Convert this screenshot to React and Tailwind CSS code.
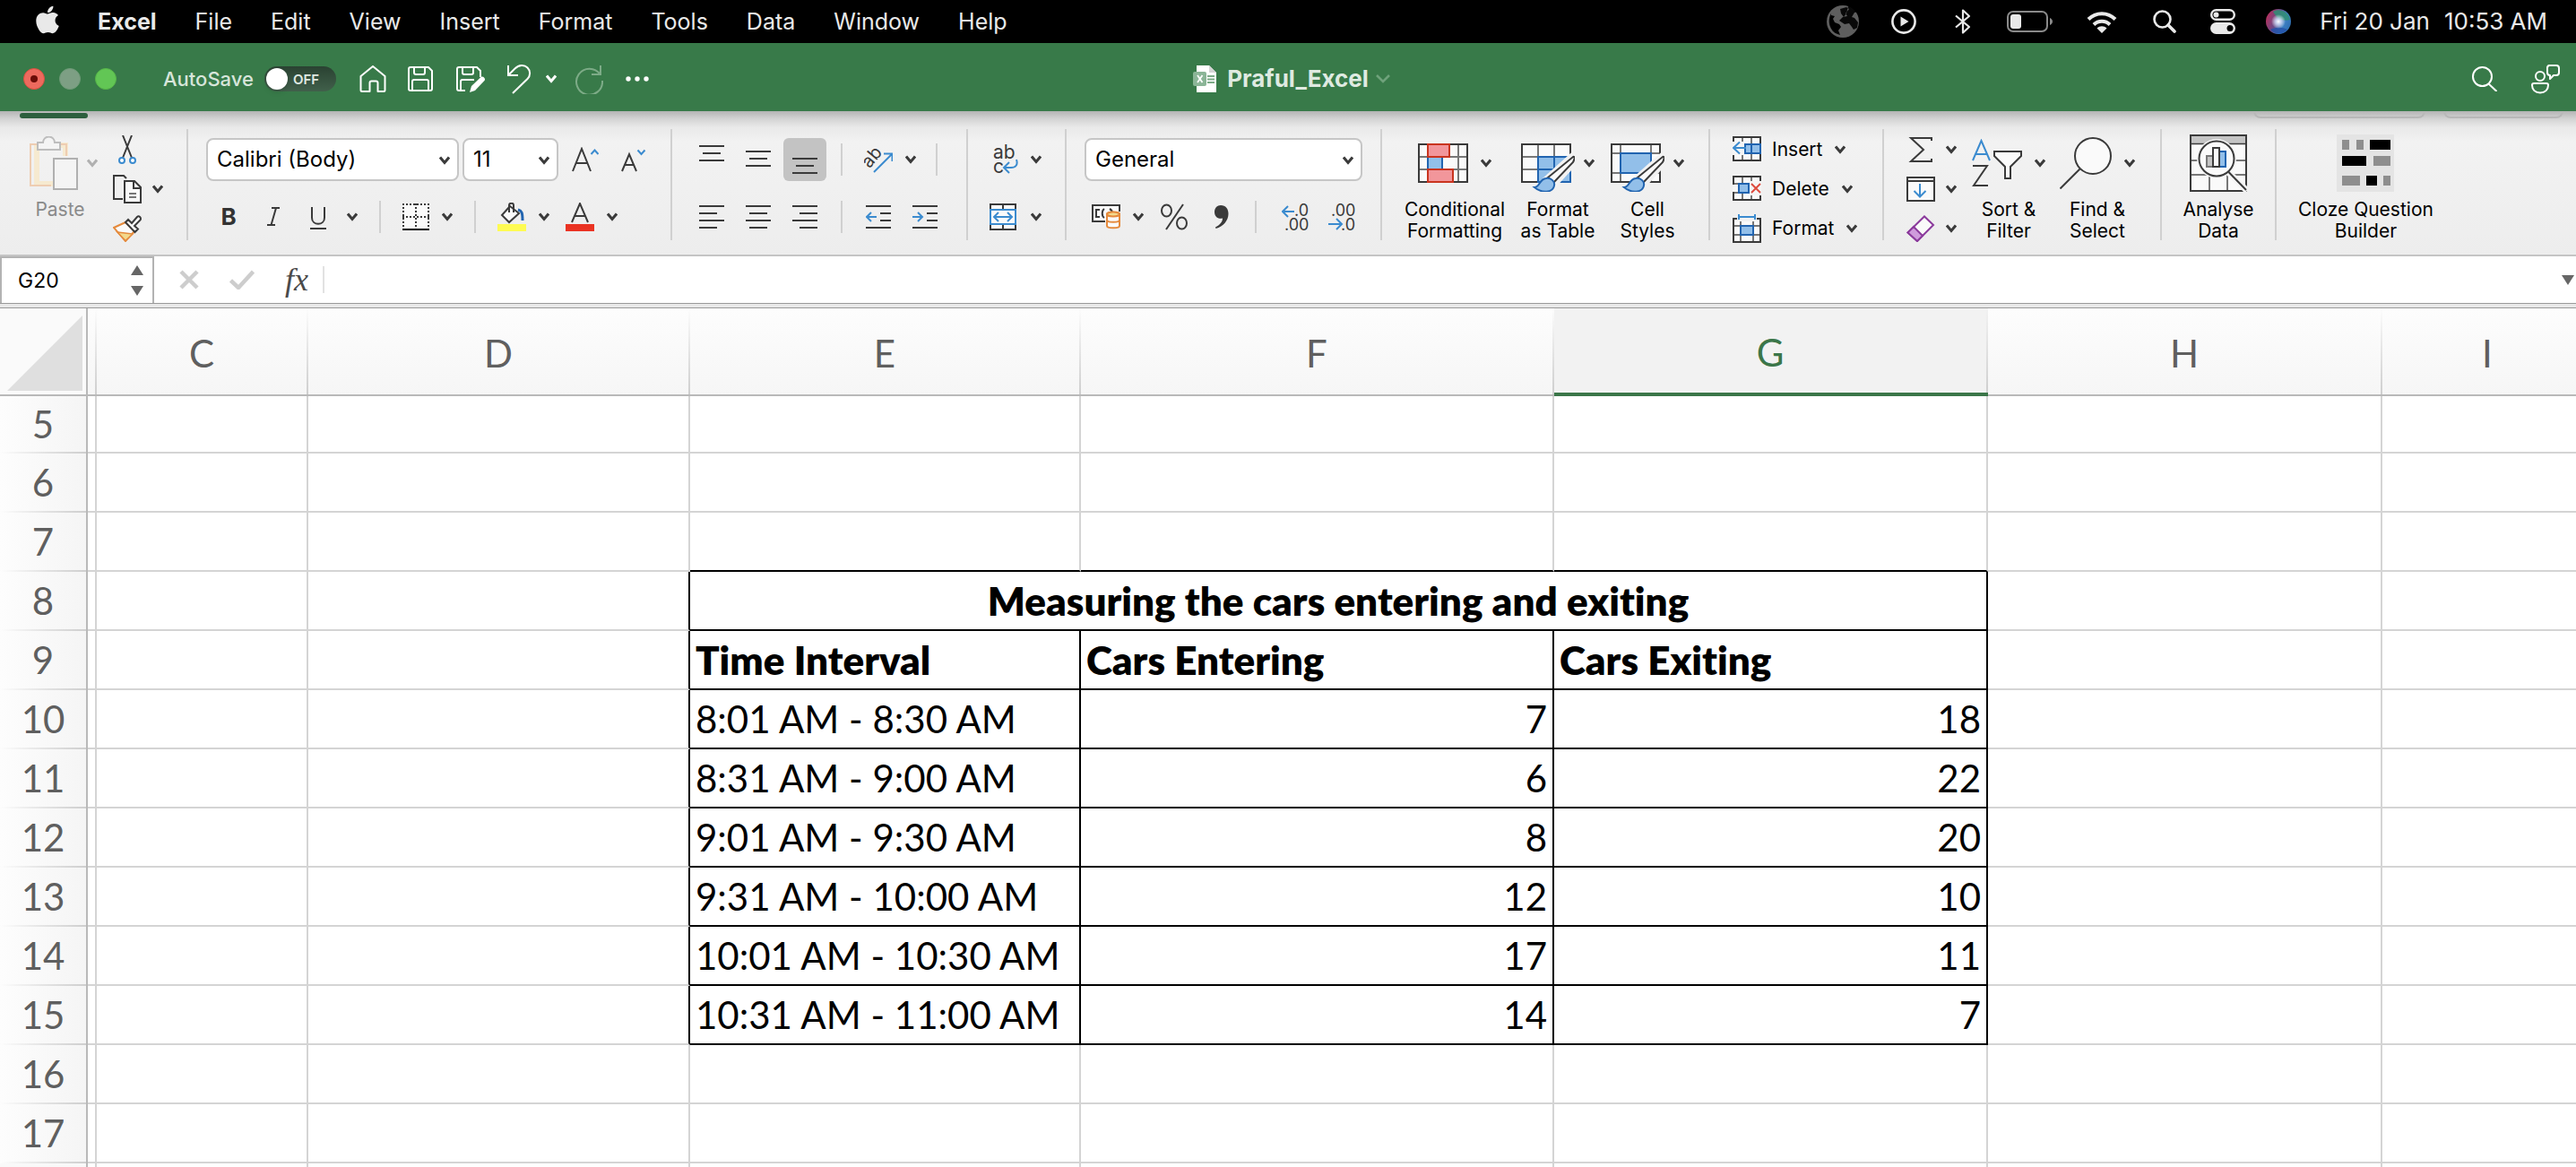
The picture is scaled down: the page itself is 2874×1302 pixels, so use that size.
import React from "react";
import { FaApple } from "react-icons/fa";

const UI = "font-['Inter','Liberation_Sans',sans-serif]";
const SHEET = "font-['Lato','Liberation_Sans',sans-serif]";

function Icon({ w, h, label, children, className = "" }) {
  return (
    <svg
      width={w}
      height={h}
      viewBox={`0 0 ${w} ${h}`}
      fill="none"
      className={`block shrink-0 ${className}`}
      role={label ? "img" : undefined}
      aria-label={label}
      aria-hidden={label ? undefined : true}
    >
      {children}
    </svg>
  );
}

function Chevron({ color = "#3a3a3a", className = "" }) {
  return (
    <Icon w={12} h={10} className={className}>
      <path d="M1 1.5 6 7.5 11 1.5" stroke={color} strokeWidth="3" />
    </Icon>
  );
}

function Tool({ label, className = "", children }) {
  return (
    <button type="button" aria-label={label} className={`flex shrink-0 items-center justify-center ${className}`}>
      {children}
    </button>
  );
}

/* ---------- macOS menu bar ---------- */

function MenuBar() {
  return (
    <header className={`flex h-12 items-center justify-between bg-black pl-10 pr-8 text-[25px] leading-none text-[#e9e9e9] ${UI}`}>
      <nav aria-label="Application menu" className="flex items-center gap-[43px]">
        <FaApple className="h-[36px] w-[26px] -mt-1" aria-label="Apple" />
        <button type="button" className="font-bold">Excel</button>
        {["File", "Edit", "View", "Insert", "Format", "Tools", "Data", "Window", "Help"].map((item) => (
          <button type="button" key={item}>{item}</button>
        ))}
      </nav>
      <div className="flex items-center text-[26px]">
        <Icon w={36} h={36} label="Network" className="mr-9">
          <circle cx="18" cy="18" r="18" fill="#5e5e5e" />
          <path d="M5 9C2 14 2 21 5 26c2 4 6 6 10 7l-2-5 3-4-2-3-5-2-2-4 2-3-4-1z" fill="#000" />
          <path d="M15 4l7-2 3 2-4 5 2 3-5 1-4 4 6 4 5-1 3 4 2 3 4-2 1-6-4-5-3-1 3-5 4-1-3-4-5-3-3 1-2 8-3 4-3-4z" fill="#000" opacity="0.9" />
        </Icon>
        <Icon w={28} h={28} label="Now playing" className="mr-[43px]">
          <circle cx="14" cy="14" r="12.6" stroke="#e9e9e9" strokeWidth="2.6" />
          <path d="M10.5 8.5v11l9-5.5z" fill="#e9e9e9" />
        </Icon>
        <Icon w={18} h={30} label="Bluetooth" className="mr-[40px]">
          <path d="M1 8.5 16 21 9 27.500V2.500L16 9 1 21.500" stroke="#e9e9e9" strokeWidth="2.2" strokeLinejoin="round" />
        </Icon>
        <Icon w={51} h={24} label="Battery" className="mr-[38px]">
          <rect x="1" y="1" width="44" height="22" rx="6" stroke="#8a8a8a" strokeWidth="2" />
          <rect x="4" y="4" width="12" height="16" rx="3" fill="#e9e9e9" />
          <path d="M48 8c4 1.500 4 6.500 0 8z" fill="#8a8a8a" />
        </Icon>
        <Icon w={34} h={25} label="Wi-Fi" className="mr-[40px]">
          <path d="M2 9.500C10.500 1 23.500 1 32 9.500" stroke="#e9e9e9" strokeWidth="4" />
          <path d="M8 15.500c5-5 13-5 18 0" stroke="#e9e9e9" strokeWidth="4" />
          <path d="M17 25l-5.500-5.500c3-3 8-3 11 0z" fill="#e9e9e9" />
        </Icon>
        <Icon w={26} h={26} label="Search" className="mr-[38px]">
          <circle cx="10.500" cy="10.500" r="9" stroke="#e9e9e9" strokeWidth="2.6" />
          <path d="M17 17l7 7" stroke="#e9e9e9" strokeWidth="3.600" strokeLinecap="round" />
        </Icon>
        <Icon w={28} h={28} label="Control Centre" className="mr-[34px]">
          <rect x="1.200" y="1.200" width="25.600" height="10.600" rx="5.300" stroke="#e9e9e9" strokeWidth="2.4" />
          <circle cx="6.500" cy="6.500" r="3" fill="#e9e9e9" />
          <rect x="0" y="15" width="28" height="13" rx="6.500" fill="#e9e9e9" />
          <circle cx="22" cy="21.500" r="3.500" fill="#000" />
        </Icon>
        <Icon w={28} h={28} label="Siri" className="mr-8">
          <defs>
            <radialGradient id="siri-core">
              <stop offset="0" stopColor="#fff" />
              <stop offset="0.400" stopColor="#d9e6ff" stopOpacity="0.8" />
              <stop offset="1" stopColor="#fff" stopOpacity="0" />
            </radialGradient>
            <linearGradient id="siri-body" x1="0" y1="0.300" x2="1" y2="0.700">
              <stop offset="0" stopColor="#b8305c" />
              <stop offset="0.400" stopColor="#6a4a86" />
              <stop offset="0.700" stopColor="#3d7fc4" />
              <stop offset="1" stopColor="#2f6fb0" />
            </linearGradient>
          </defs>
          <circle cx="14" cy="14" r="14" fill="url(#siri-body)" />
          <path d="M8 3c6-4 17-1 19 9-6 2-11 0-15-3z" fill="#2f8f74" opacity="0.85" />
          <path d="M5 23c5 6 14 6 19 0-5-3-13-3-19 0z" fill="#2350a8" opacity="0.8" />
          <circle cx="14" cy="14" r="8" fill="url(#siri-core)" />
        </Icon>
        <time className="mr-4">Fri 20 Jan</time>
        <time>10:53 AM</time>
      </div>
    </header>
  );
}

/* ---------- Window title bar ---------- */

function TitleBar() {
  const s = { stroke: "#fff", strokeWidth: 2, strokeLinejoin: "round" };
  return (
    <div className={`grid h-[76px] grid-cols-[1fr_auto_1fr] items-center bg-[#387a49] pl-[26px] pr-[18px] pt-1 ${UI}`}>
      <div className="flex items-center">
        <div className="mr-[52px] flex gap-4">
          <button type="button" aria-label="Close" className="flex size-6 items-center justify-center rounded-full border border-[#d9503f] bg-[#ed6a5e]">
            <span className="size-2 rounded-full bg-[#6b0d08]" />
          </button>
          <button type="button" aria-label="Minimise" className="size-6 rounded-full border border-[#6f9a78] bg-[#7d9f84]" />
          <button type="button" aria-label="Zoom" className="size-6 rounded-full border border-[#57b548] bg-[#62c655]" />
        </div>
        <label className="mr-[26px] flex items-center gap-3 text-[22px] font-medium leading-6 text-[#d7e5da]">
          AutoSave
          <input type="checkbox" role="switch" className="peer sr-only" />
          <span className="flex h-7 w-20 items-center rounded-full bg-gradient-to-b from-[#2a4232] to-[#41604b] pl-0.5 text-[15px] font-semibold leading-none text-[#dfe8e1]">
            <span className="mr-1.5 size-6 rounded-full bg-white shadow-md" />
            OFF
          </span>
        </label>
        <Tool label="Home" className="mr-6">
          <Icon w={30} h={30}>
            <path d="M1.500 12 15 1l13.500 11v15.500a1.500 1.500 0 0 1-1.500 1.500h-6.500V19.500a2 2 0 0 0-2-2h-5a2 2 0 0 0-2 2V29H3a1.500 1.500 0 0 1-1.500-1.500z" {...s} />
          </Icon>
        </Tool>
        <Tool label="Save" className="mr-[26px]">
          <Icon w={28} h={28}>
            <path d="M3 1h20l4 4v20a2 2 0 0 1-2 2H3a2 2 0 0 1-2-2V3a2 2 0 0 1 2-2z" {...s} />
            <path d="M7 1v6a2 2 0 0 0 2 2h8a2 2 0 0 0 2-2V1M5 27V17a2 2 0 0 1 2-2h14a2 2 0 0 1 2 2v10" {...s} />
          </Icon>
        </Tool>
        <Tool label="Save As" className="mr-6">
          <Icon w={32} h={32}>
            <path d="M10 29H3a2 2 0 0 1-2-2V5a2 2 0 0 1 2-2h20l4 4v7" {...s} />
            <path d="M7 3v6a2 2 0 0 0 2 2h8a2 2 0 0 0 2-2V3M5 29V19a2 2 0 0 1 2-2h13" {...s} />
            <path d="M15 31l2-7L27 14.500a2.500 2.500 0 0 1 4 0 2.500 2.500 0 0 1 0 4L21 29z" fill="#fff" />
          </Icon>
        </Tool>
        <Tool label="Undo" className="mr-4">
          <Icon w={28} h={34}>
            <path d="M2 2v11h11M2.500 12.500l7-7C14 1 20 1 23.500 4.500s3.500 9 0 12.500L7 33" {...s} strokeLinejoin="miter" />
          </Icon>
        </Tool>
        <Tool label="Undo history" className="mr-5"><Chevron color="#fff" /></Tool>
        <Tool label="Redo" className="mr-[25px]">
          <Icon w={32} h={34}>
            <path d="M29 2v10H19M28.500 12A14.500 14.500 0 1 0 31 19" stroke="#7dab87" strokeWidth="2" />
          </Icon>
        </Tool>
        <Tool label="More commands">
          <Icon w={27} h={6}>
            <circle cx="3" cy="3" r="2.700" fill="#fff" /><circle cx="13" cy="3" r="2.700" fill="#fff" /><circle cx="23" cy="3" r="2.700" fill="#fff" />
          </Icon>
        </Tool>
      </div>
      <h1 className="flex items-center text-[26px] font-bold leading-none text-[#dfeae1]">
        <Icon w={26} h={30} className="mr-3">
          <path d="M4 0h14l8 8v22H4z" fill="#fff" />
          <path d="M18 0v8h8z" fill="#d5d5d5" />
          <rect x="0" y="7" width="15" height="16" rx="2" fill="#8bb597" />
          <path d="M5 11l5.500 8M10.500 11 5 19" stroke="#fff" strokeWidth="1.800" />
          <path d="M16 12h8M16 15.500h8M16 19h8" stroke="#7dab87" strokeWidth="2" />
        </Icon>
        Praful_Excel
        <Icon w={16} h={10} className="ml-2">
          <path d="M1 1l7 7 7-7" stroke="#6fa27b" strokeWidth="2.6" />
        </Icon>
      </h1>
      <div className="flex items-center justify-end">
        <Tool label="Search" className="mr-[38px]">
          <Icon w={28} h={28}>
            <circle cx="11.500" cy="11.500" r="10.500" {...s} /><path d="M18.500 19.500 27.500 28" {...s} />
          </Icon>
        </Tool>
        <Tool label="Comments and share">
          <Icon w={32} h={34}>
            <circle cx="10" cy="14" r="5" {...s} />
            <path d="M3 22h14a2 2 0 0 1 2 2c0 5-3.500 8.500-9 8.500S1 29 1 24a2 2 0 0 1 2-2z" {...s} />
            <path d="M20 2h8a3 3 0 0 1 3 3v5a3 3 0 0 1-3 3h-3l-4 4v-4a3 3 0 0 1-3-3V5a3 3 0 0 1 2-3z" {...s} />
          </Icon>
        </Tool>
      </div>
    </div>
  );
}

/* ---------- Ribbon ---------- */

const DARK = "#3a3a3a";
const BLUE = "#3b8bcf";

function Divider() {
  return <div className="h-[124px] w-0.5 shrink-0 bg-[#d0d0d0]" />;
}

function ShortDivider({ className = "" }) {
  return <div className={`h-9 w-0.5 shrink-0 bg-[#d0d0d0] ${className}`} />;
}

function BigButton({ lines, icon, menu = true, muted = false, className = "" }) {
  return (
    <button
      type="button"
      className={`flex shrink-0 flex-col items-center text-[21px] leading-6 ${muted ? "text-[#8a8a8a]" : "text-black"} ${className}`}
    >
      <span className={`mb-2 mt-1.5 flex h-16 items-center ${muted ? "gap-2.5" : "gap-3.5"}`}>
        {icon}
        {menu && <Chevron color={muted ? "#b0b0b0" : DARK} />}
      </span>
      {lines.map((line) => (
        <span key={line} className={`whitespace-nowrap ${muted ? "pr-2" : ""}`}>{line}</span>
      ))}
    </button>
  );
}

function SelectBox({ label, value, className }) {
  return (
    <div className="relative w-fit shrink-0">
      <select
        aria-label={label}
        defaultValue={value}
        className={`block h-12 appearance-none rounded-lg border-2 border-[#c6c6c6] bg-white pl-2.5 text-[24px] text-black ${className}`}
      >
        <option>{value}</option>
      </select>
      <Chevron className="pointer-events-none absolute right-2.5 top-5" />
    </div>
  );
}

/* Horizontal rules, each given as [x, y, width]. */
function Rules({ rules, h = 28, children }) {
  return (
    <Icon w={28} h={h}>
      {rules.map(([x, y, w]) => <rect key={y} x={x} y={y} width={w} height="2" fill={DARK} />)}
      {children}
    </Icon>
  );
}

function Brush() {
  return (
    <>
      <path d="M59 13c3-1 3 3 0 8L37 45l-7-6z" stroke="#f2f2f2" strokeWidth="8" />
      <path d="M58 15c2.500-1 2 2 0 6L36 44l-6-6z" fill="#fafafa" stroke={DARK} strokeWidth="2" />
      <path d="M15 49c6 0 5-9 13-10 6-1 10 4 9 8-1 8-14 9-22 2z" fill="#92bfe9" stroke="#2164b0" strokeWidth="2" />
    </>
  );
}

function ClipboardGroup() {
  return (
    <div className="flex w-[208px] shrink-0 pl-[33px]">
      <BigButton
        muted
        lines={["Paste"]}
        icon={
          <Icon w={54} h={60}>
            <path d="M8 10v43h18M34 10h6v12" stroke="#f6ead0" strokeWidth="6" />
            <path d="M9 9H1v46h23M33 9h8v13" stroke="#eecdb2" strokeWidth="2" />
            <path d="M9 7h6a6.500 6.500 0 0 1 13 0h6v8H9z" fill="#f4f4f4" stroke="#bdbdbd" strokeWidth="2" />
            <rect x="27" y="25" width="26" height="34" fill="#f4f4f4" stroke="#b0b0b0" strokeWidth="2" />
          </Icon>
        }
      />
      <div className="ml-[17px] mt-[7px] flex flex-col items-start gap-3">
        <Tool label="Cut" className="h-8 w-8">
          <Icon w={20} h={32}>
            <path d="M5 0l10 25M15 0 5 25" stroke={DARK} strokeWidth="2" />
            <circle cx="4" cy="28" r="3" stroke={BLUE} strokeWidth="2" fill="#fff" />
            <circle cx="16" cy="28" r="3" stroke={BLUE} strokeWidth="2" fill="#fff" />
          </Icon>
        </Tool>
        <Tool label="Copy" className="h-8 gap-3">
          <Icon w={32} h={32}>
            <path d="M11 27H1V1h11l3 3" stroke={DARK} strokeWidth="2" />
            <path d="M13 7h11l7 7v17H13z" fill="#fafafa" stroke={DARK} strokeWidth="2" />
            <path d="M23 7v8h8" stroke={DARK} strokeWidth="2" />
            <path d="M18 21h8M18 25h8" stroke="#777" strokeWidth="2" />
          </Icon>
          <Chevron />
        </Tool>
        <Tool label="Format Painter" className="h-8">
          <Icon w={32} h={30}>
            <path d="M1 14 14 8l10 10-10 11z" fill="#fafafa" stroke="#e58a3c" strokeWidth="2" />
            <path d="M5 19l17 2-8 7.500z" fill="#f3d98c" stroke="#e58a3c" strokeWidth="1.500" />
            <path d="M14 8l3-3 4 4 6-7c2-2 5 1 3.500 3.500L24 12l4 3.500-3.500 3.500z" fill="#fafafa" stroke={DARK} strokeWidth="2" />
          </Icon>
        </Tool>
      </div>
    </div>
  );
}

function FontGroup() {
  return (
    <div className="flex w-[538px] shrink-0 flex-col gap-[22px] pl-5 pt-2.5">
      <div className="flex items-center">
        <SelectBox label="Font" value="Calibri (Body)" className="w-[282px]" />
        <div className="w-1" />
        <SelectBox label="Font size" value="11" className="w-[107px]" />
        <Tool label="Increase font size" className="ml-[15px]">
          <Icon w={30} h={28}>
            <path d="M1 27 11 2l10 25M4.500 18h13" stroke={DARK} strokeWidth="2" />
            <path d="M21.500 8 25.500 3.500 29.500 8" stroke={BLUE} strokeWidth="2" />
          </Icon>
        </Tool>
        <Tool label="Decrease font size" className="ml-[25px]">
          <Icon w={28} h={28}>
            <path d="M1 27 9 8l8 19M4 20h10" stroke={DARK} strokeWidth="2" />
            <path d="M18.500 3.500 22.500 8 26.500 3.500" stroke={BLUE} strokeWidth="2" />
          </Icon>
        </Tool>
      </div>
      <div className="flex h-9 items-center gap-3.5 pl-[7px] text-[26px] leading-9 text-[#333]">
        <Tool label="Bold" className="w-9 font-bold">B</Tool>
        <Tool label="Italic" className="w-9">
          <Icon w={14} h={22}><path d="M5 1h9M0 20h9M10 1 4.500 20" stroke={DARK} strokeWidth="2" /></Icon>
        </Tool>
        <Tool label="Underline" className="w-9">
          <Icon w={18} h={26} className="mt-1"><path d="M2 0v12c0 9 14 9 14 0V0M0 24h18" stroke={DARK} strokeWidth="2" /></Icon>
        </Tool>
        <Tool label="Underline style"><Chevron /></Tool>
        <ShortDivider className="mx-2.5" />
        <Tool label="Borders" className="gap-3.5">
          <Icon w={30} h={30}>
            <rect x="0" y="0" width="30" height="28" fill="#fafafa" />
            <path d="M0 1h30M0 15h30M1 0v28M15 0v28M29 0v28" stroke={DARK} strokeWidth="2" strokeDasharray="2 2" />
            <path d="M0 29h30" stroke="#000" strokeWidth="2" />
          </Icon>
          <Chevron />
        </Tool>
        <ShortDivider className="mx-2.5" />
        <Tool label="Fill colour" className="gap-3.5">
          <Icon w={32} h={32}>
            <rect y="24" width="32" height="8" fill="#fefb54" />
            <path d="M14 4 5 14l8 8 11-10z" fill="#fafafa" stroke={DARK} strokeWidth="2" />
            <path d="M13 11V3c0-3 5-3 5 0v8" stroke={DARK} strokeWidth="2" />
            <path d="M23 8c4 1 5 3 5 12" stroke="#2164b0" strokeWidth="3" />
          </Icon>
          <Chevron />
        </Tool>
        <Tool label="Font colour" className="ml-1 gap-3.5">
          <Icon w={32} h={32}>
            <rect y="24" width="32" height="8" fill="#ea3323" />
            <path d="M7 22 16 1l9 21M10 15h12" stroke={DARK} strokeWidth="2" />
          </Icon>
          <Chevron />
        </Tool>
      </div>
    </div>
  );
}

function AlignmentGroup() {
  return (
    <div className="flex w-[328px] shrink-0 flex-col gap-[22px] pl-5 pt-2.5">
      <div className="flex h-12 items-center">
        <div className="flex gap-1">
          <Tool label="Align top" className="h-12 w-12"><Rules h={32} rules={[[0, 0, 28], [4, 8, 20], [0, 16, 28]]} /></Tool>
          <Tool label="Align middle" className="h-12 w-12"><Rules h={32} rules={[[0, 6, 28], [4, 14, 20], [0, 22, 28]]} /></Tool>
          <Tool label="Align bottom" className="h-12 w-12 rounded-md bg-[#c3c3c3]"><Rules h={32} rules={[[0, 14, 28], [4, 22, 20], [0, 30, 28]]} /></Tool>
        </div>
        <ShortDivider className="mx-4" />
        <Tool label="Orientation" className="ml-2 gap-3.5">
          <Icon w={32} h={32}>
            <text x="-2" y="19" transform="rotate(-50 10 14)" className="font-['Inter',sans-serif]" fontSize="20" fill={DARK}>ab</text>
            <path d="M11 30 31 10M22 9.500h9.500V18" stroke={BLUE} strokeWidth="2" />
          </Icon>
          <Chevron />
        </Tool>
        <ShortDivider className="ml-[22px]" />
      </div>
      <div className="flex h-9 items-center">
        <div className="flex gap-1">
          <Tool label="Align left" className="w-12"><Rules rules={[[0, 1, 28], [0, 9, 20], [0, 17, 28], [0, 25, 20]]} /></Tool>
          <Tool label="Centre" className="w-12"><Rules rules={[[0, 1, 28], [4, 9, 20], [0, 17, 28], [4, 25, 20]]} /></Tool>
          <Tool label="Align right" className="w-12"><Rules rules={[[0, 1, 28], [8, 9, 20], [0, 17, 28], [8, 25, 20]]} /></Tool>
        </div>
        <ShortDivider className="mx-4" />
        <div className="flex gap-1">
          <Tool label="Decrease indent" className="w-12">
            <Rules rules={[[0, 1, 28], [16, 9, 12], [16, 17, 12], [0, 25, 28]]}>
              <path d="M12 14H1M6 9l-5 5 5 5" stroke={BLUE} strokeWidth="2" />
            </Rules>
          </Tool>
          <Tool label="Increase indent" className="w-12">
            <Rules rules={[[0, 1, 28], [16, 9, 12], [16, 17, 12], [0, 25, 28]]}>
              <path d="M0 14h11M6 9l5 5-5 5" stroke={BLUE} strokeWidth="2" />
            </Rules>
          </Tool>
        </div>
      </div>
    </div>
  );
}

function WrapGroup() {
  return (
    <div className="flex w-[108px] shrink-0 flex-col gap-[22px] pl-6 pt-2.5">
      <Tool label="Wrap text" className="h-12 gap-3.5 self-start">
        <Icon w={32} h={34}>
          <text x="4" y="16" className="font-['Inter',sans-serif]" fontSize="21" fill={DARK}>ab</text>
          <text x="4" y="32" className="font-['Inter',sans-serif]" fontSize="21" fill={DARK}>c</text>
          <path d="M30 17c2 6-1 9-6 9h-7M22 20l-6 6 6 6" stroke={BLUE} strokeWidth="2" />
        </Icon>
        <Chevron />
      </Tool>
      <Tool label="Merge and centre" className="h-9 gap-4 self-start">
        <Icon w={30} h={30}>
          <rect x="1" y="1" width="28" height="28" fill="#fafafa" stroke={DARK} strokeWidth="2" />
          <path d="M15 1v6M15 23v6" stroke={DARK} strokeWidth="2" />
          <rect x="1" y="7" width="28" height="16" fill="#fafafa" stroke={BLUE} strokeWidth="2" />
          <path d="M5 15h20M10 10l-5 5 5 5M20 10l5 5-5 5" stroke={BLUE} strokeWidth="2" />
        </Icon>
        <Chevron />
      </Tool>
    </div>
  );
}

function Decimals({ top, bottom, topX, bottomX, children }) {
  return (
    <Icon w={32} h={32}>
      <text x={topX} y="15" className="font-['Inter',sans-serif]" fontSize="18" fill={DARK}>{top}</text>
      <text x={bottomX} y="31" className="font-['Inter',sans-serif]" fontSize="18" fill={DARK}>{bottom}</text>
      {children}
    </Icon>
  );
}

function NumberGroup() {
  return (
    <div className="flex w-[350px] shrink-0 flex-col gap-[22px] pl-5 pt-2.5">
      <SelectBox label="Number format" value="General" className="w-[310px]" />
      <div className="flex h-9 items-center pl-2">
        <Tool label="Accounting format" className="gap-3.5">
          <Icon w={32} h={28}>
            <path d="M15 19H1V1h30v7" fill="#fafafa" stroke={DARK} strokeWidth="2" />
            <path d="M9 6H5v8h4M14 15c-3-2-3-8 0-10M20 5c2 1 3 3 3 5" stroke={DARK} strokeWidth="2" />
            <path d="M17 11c0-3 14-3 14 0v13c0 3-14 3-14 0z" fill="#fafafa" stroke="#e58a3c" strokeWidth="2" />
            <ellipse cx="24" cy="11" rx="7" ry="2.500" fill="#f3d98c" stroke="#e58a3c" strokeWidth="2" />
            <path d="M17 17.500c0 3 14 3 14 0" stroke="#e58a3c" strokeWidth="2" />
          </Icon>
          <Chevron />
        </Tool>
        <Tool label="Percent style" className="ml-[18px]">
          <Icon w={32} h={30}>
            <ellipse cx="7.500" cy="8" rx="5.500" ry="6.500" stroke={DARK} strokeWidth="2" />
            <ellipse cx="24.500" cy="22" rx="5.500" ry="6.500" stroke={DARK} strokeWidth="2" />
            <path d="M26 1 7 29" stroke={DARK} strokeWidth="2" />
          </Icon>
        </Tool>
        <Tool label="Comma style" className="ml-7">
          <Icon w={18} h={26}>
            <path d="M8 0c5.500 0 8.500 4 8.500 9.500C16.500 17 11 23.500 2.500 26l-.5-1.500c5-2.500 8-6 8-10-5 1.500-9-2-9-7C1 3 4 0 8 0z" fill={DARK} />
          </Icon>
        </Tool>
        <ShortDivider className="mx-7" />
        <Tool label="Increase decimal">
          <Decimals top=".0" bottom=".00" topX={14} bottomX={3}>
            <path d="M14 10H1M7 4l-6 6 6 6" stroke={BLUE} strokeWidth="2" />
          </Decimals>
        </Tool>
        <Tool label="Decrease decimal" className="ml-5">
          <Decimals top=".00" bottom=".0" topX={3} bottomX={14}>
            <path d="M0 24h14M9 18l6 6-6 6" stroke={BLUE} strokeWidth="2" />
          </Decimals>
        </Tool>
      </div>
    </div>
  );
}

function StylesGroup() {
  return (
    <div className="flex w-[364px] shrink-0 gap-4 pl-6">
      <BigButton
        className="w-[114px]"
        lines={["Conditional", "Formatting"]}
        icon={
          <Icon w={56} h={44}>
            <rect x="1" y="1" width="54" height="42" fill="#fafafa" stroke={DARK} strokeWidth="2" />
            <path d="M2 15h52M2 29h52M11 2v40M45 2v40" stroke="#777" strokeWidth="2" />
            <rect x="11" y="15" width="16" height="14" fill="#92bfe9" stroke="#2164b0" strokeWidth="2" />
            <rect x="11" y="1" width="24" height="14" fill="#f2969b" stroke="#c9341f" strokeWidth="2" />
            <rect x="11" y="29" width="28" height="14" fill="#f2969b" stroke="#c9341f" strokeWidth="2" />
          </Icon>
        }
      />
      <BigButton
        className="w-[84px]"
        lines={["Format", "as Table"]}
        icon={
          <Icon w={60} h={54} className="-mr-1 mt-2.5">
            <rect x="1" y="1" width="54" height="42" fill="#fafafa" stroke={DARK} strokeWidth="2" />
            <path d="M2 15h52M2 29h17M19 2v40M37 2v13" stroke="#777" strokeWidth="2" />
            <path d="M19 15h36v28H19z" fill="#92bfe9" stroke="#2164b0" strokeWidth="2" />
            <path d="M37 15v28M19 29h36" stroke="#2164b0" strokeWidth="2" />
            <Brush />
          </Icon>
        }
      />
      <BigButton
        className="w-[84px]"
        lines={["Cell", "Styles"]}
        icon={
          <Icon w={60} h={54} className="-mr-1 mt-2.5">
            <rect x="1" y="1" width="54" height="42" fill="#fafafa" stroke={DARK} strokeWidth="2" />
            <path d="M2 11h52M2 33h52M11 2v40M45 2v40" stroke="#777" strokeWidth="2" />
            <rect x="11" y="11" width="34" height="22" fill="#92bfe9" stroke="#2164b0" strokeWidth="2" />
            <Brush />
          </Icon>
        }
      />
    </div>
  );
}

function CellsGroup() {
  const grid = (
    <>
      <rect x="1" y="1" width="30" height="26" fill="#fafafa" stroke={DARK} strokeWidth="2" />
      <path d="M11 2v24M21 2v24M2 9h28M2 19h28" stroke="#777" strokeWidth="2" />
    </>
  );
  const items = [
    ["Insert", (
      <Icon key="i" w={32} h={32}>
        <g transform="translate(0 1)">
          {grid}
          <path d="M0 6h14v15H0z" fill="#f5f5f5" />
          <rect x="14" y="9" width="17" height="10" fill="#92bfe9" stroke="#2164b0" strokeWidth="2" />
          <path d="M21 9v10" stroke="#2164b0" strokeWidth="2" />
          <path d="M1 13h14M8 6.500 1 13l7 6.500" stroke={BLUE} strokeWidth="2" />
        </g>
      </Icon>
    )],
    ["Delete", (
      <Icon key="d" w={32} h={32}>
        <g transform="translate(0 1)">
          {grid}
          <path d="M0 10h8v8H0zM18 6h14v16H18z" fill="#f5f5f5" />
          <rect x="7" y="9" width="11" height="10" fill="#92bfe9" stroke="#2164b0" strokeWidth="2" />
          <path d="M21 9l10 10M31 9 21 19" stroke="#dd4b3e" strokeWidth="2" />
        </g>
      </Icon>
    )],
    ["Format", (
      <Icon key="f" w={32} h={32}>
        <rect x="1" y="5" width="30" height="26" fill="#fafafa" stroke={DARK} strokeWidth="2" />
        <path d="M9 6v24M23 6v24M2 13h28M2 23h28" stroke="#777" strokeWidth="2" />
        <path d="M5 0h22v8H5z" fill="#f2f2f2" />
        <rect x="9" y="13" width="14" height="10" fill="#92bfe9" stroke="#2164b0" strokeWidth="2" />
        <path d="M7 0v6M25 0v6M7 3h18" stroke={BLUE} strokeWidth="2" />
      </Icon>
    )],
  ];
  return (
    <div className="flex w-[192px] shrink-0 flex-col items-start gap-3 pl-[25px] pt-[7px] text-[21px] leading-8 text-black">
      {items.map(([label, icon]) => (
        <button type="button" key={label} className="flex h-8 items-center">
          {icon}
          <span className="ml-3 mr-3.5">{label}</span>
          <Chevron />
        </button>
      ))}
    </div>
  );
}

function EditingGroup() {
  return (
    <div className="flex w-[308px] shrink-0 pl-[25px]">
      <div className="flex flex-col gap-3 pt-[7px]">
        <Tool label="AutoSum" className="h-8 gap-3">
          <Icon w={32} h={28}>
            <path d="M28 4V1H5l14 13L5 27h23v-3" stroke={DARK} strokeWidth="2" />
          </Icon>
          <Chevron />
        </Tool>
        <Tool label="Fill" className="h-8 gap-3">
          <Icon w={32} h={28}>
            <rect x="1" y="1" width="30" height="26" fill="#fafafa" stroke={DARK} strokeWidth="2" />
            <path d="M1 5h30" stroke={DARK} strokeWidth="2" />
            <path d="M15 8v14M8.500 16l6.500 6.500L21.500 16" stroke={BLUE} strokeWidth="2" />
          </Icon>
          <Chevron />
        </Tool>
        <Tool label="Clear" className="h-8 gap-3">
          <Icon w={32} h={30}>
            <path d="M1.500 19.500 20 1.500 30 11 12 29z" fill="#fafafa" stroke="#8b3a9c" strokeWidth="2" />
            <path d="M1.500 19.500 8 13l10 10-6 6z" fill="#cf9bdc" stroke="#8b3a9c" strokeWidth="2" />
          </Icon>
          <Chevron />
        </Tool>
      </div>
      <BigButton
        className="ml-[17px]"
        lines={["Sort &", "Filter"]}
        icon={
          <Icon w={56} h={54}>
            <path d="M1 24 10.500 2 20 24M4 17h13" stroke={BLUE} strokeWidth="2" />
            <path d="M1 30h16L2 52h16" stroke={DARK} strokeWidth="2" />
            <path d="M25 14h30v5L43 31v13h-6V31L25 19z" fill="#fafafa" stroke={DARK} strokeWidth="2" />
          </Icon>
        }
      />
      <BigButton
        className="ml-4"
        lines={["Find &", "Select"]}
        icon={
          <Icon w={58} h={58}>
            <circle cx="37" cy="21" r="20" fill="#fafafa" stroke={DARK} strokeWidth="2" />
            <path d="M22.500 35.500.500 57.500" stroke={DARK} strokeWidth="2" />
          </Icon>
        }
      />
    </div>
  );
}

function Ribbon() {
  return (
    <section
      aria-label="Home ribbon"
      className={`relative flex items-start overflow-hidden border-b-2 border-[#c4c4c4] bg-[linear-gradient(to_bottom,#b4b4b4_0px,#d2d2d2_8px,#e9e9e9_18px,#f2f2f2_34px,#ededed_100%)] pb-[13px] pt-5 ${UI}`}
    >
      <div className="absolute left-[22px] top-0.5 h-1.5 w-[76px] rounded-full bg-[#2d5f3e]" />
      <div className="absolute right-[14px] top-0 flex gap-5">
        <div className="h-2 w-48 rounded-b-lg border-2 border-t-0 border-[#b8b8b8]" />
        <div className="h-2 w-[134px] rounded-b-lg border-2 border-t-0 border-[#b8b8b8]" />
      </div>
      <ClipboardGroup />
      <Divider />
      <FontGroup />
      <Divider />
      <AlignmentGroup />
      <Divider />
      <WrapGroup />
      <Divider />
      <NumberGroup />
      <Divider />
      <StylesGroup />
      <Divider />
      <CellsGroup />
      <Divider />
      <EditingGroup />
      <Divider />
      <div className="flex w-[126px] shrink-0 justify-center">
        <BigButton
          menu={false}
          lines={["Analyse", "Data"]}
          icon={
            <Icon w={64} h={64}>
              <rect x="1" y="1" width="62" height="62" fill="#fafafa" stroke={DARK} strokeWidth="2" />
              <rect x="2" y="2" width="60" height="8" fill="#c4c4c4" />
              <path d="M2 10.500h60" stroke={DARK} strokeWidth="1.500" />
              <path d="M2 29h60M2 45h60M22 45v17M42 45v17" stroke="#777" strokeWidth="2" />
              <circle cx="30" cy="27" r="22" fill="#f5f5f5" />
              <path d="M43 42l21 21" stroke="#f5f5f5" strokeWidth="7" />
              <circle cx="30" cy="27" r="19.500" fill="#fafafa" stroke={DARK} strokeWidth="2" />
              <path d="M43.500 42 63 62" stroke={DARK} strokeWidth="2" />
              <rect x="19" y="24" width="7" height="12" fill="#c4c4c4" stroke="#777" strokeWidth="2" />
              <rect x="33" y="19" width="7" height="17" fill="#92bfe9" stroke="#2164b0" strokeWidth="2" />
              <rect x="26" y="15" width="7" height="21" fill="#fafafa" stroke={DARK} strokeWidth="2" />
            </Icon>
          }
        />
      </div>
      <Divider />
      <BigButton
        menu={false}
        className="ml-6"
        lines={["Cloze Question", "Builder"]}
        icon={
          <Icon w={64} h={64}>
            <rect width="64" height="64" fill="#e4e4e4" />
            <path d="M6 6h8v11H6zM22 6h8v11h-8zM41 24h19v11H41zM6 46h20v11H6zM52 46h8v11h-8z" fill="#8e8e8e" />
            <path d="M37 6h23v11H37zM6 24h27v11H6zM33 46h12v11H33z" fill="#000" />
          </Icon>
        }
      />
    </section>
  );
}

/* ---------- Formula bar ---------- */

function FormulaBar() {
  return (
    <div className={`flex h-[52px] items-center bg-white ${UI}`}>
      <div className="flex h-full w-[172px] shrink-0 items-center justify-between border-2 border-b-0 border-[#b3b3b3] pl-[18px] pr-2.5">
        <input aria-label="Name box" defaultValue="G20" className="w-24 bg-transparent text-[23px] text-black outline-none" />
        <Icon w={14} h={34}>
          <path d="M7 0l7 11H0zM7 34l7-11H0z" fill="#666" />
        </Icon>
      </div>
      <Tool label="Cancel" className="ml-7">
        <Icon w={22} h={22}><path d="M2 2l18 18M20 2 2 20" stroke="#cdcdcd" strokeWidth="4.500" /></Icon>
      </Tool>
      <Tool label="Enter" className="ml-[34px]">
        <Icon w={28} h={22}><path d="M1.500 12 10 20 26.500 2" stroke="#cdcdcd" strokeWidth="4.500" /></Icon>
      </Tool>
      <Tool label="Insert function" className="ml-8 w-[30px] text-[36px] italic leading-none text-[#4a4a4a] font-['Liberation_Serif',serif]">
        fx
      </Tool>
      <div className="ml-[14px] h-[30px] w-0.5 bg-[#e2e2e2]" />
      <input aria-label="Formula" className="h-full min-w-0 flex-1 bg-transparent px-3 text-[22px] outline-none" />
      <Tool label="Expand formula bar" className="mr-0.5">
        <Icon w={14} h={11}><path d="M0 0h14L7 11z" fill="#666" /></Icon>
      </Tool>
    </div>
  );
}

/* ---------- Worksheet ---------- */

const DATA = {
  10: ["8:01 AM - 8:30 AM", 7, 18],
  11: ["8:31 AM - 9:00 AM", 6, 22],
  12: ["9:01 AM - 9:30 AM", 8, 20],
  13: ["9:31 AM - 10:00 AM", 12, 10],
  14: ["10:01 AM - 10:30 AM", 17, 11],
  15: ["10:31 AM - 11:00 AM", 14, 7],
};
const ROWS = [5, 6, 7, 8, 9, 10, 11, 12, 13, 14, 15, 16, 17];

function Blank({ right = "border-r-[#d4d4d4]", bottom = "border-b-[#d4d4d4]" }) {
  return <td className={`border-b-2 border-r-2 ${right} ${bottom}`} />;
}

function Filled({ children, align = "text-left", bold = false, span = 1 }) {
  return (
    <td
      colSpan={span}
      className={`whitespace-nowrap border-b-2 border-r-2 border-black px-1.5 py-0 ${align} ${bold ? "text-[44px] font-extrabold" : "font-normal"}`}
    >
      {children}
    </td>
  );
}

function RowCells({ row }) {
  if (row === 8) return <Filled span={3} bold align="text-center">Measuring the cars entering and exiting</Filled>;
  if (row === 9)
    return (
      <>
        <Filled bold>Time Interval</Filled>
        <Filled bold>Cars Entering</Filled>
        <Filled bold>Cars Exiting</Filled>
      </>
    );
  if (DATA[row]) {
    const [interval, entering, exiting] = DATA[row];
    return (
      <>
        <Filled>{interval}</Filled>
        <Filled align="text-right">{entering}</Filled>
        <Filled align="text-right">{exiting}</Filled>
      </>
    );
  }
  const bottom = row === 7 ? "border-b-black" : undefined;
  return (
    <>
      <Blank bottom={bottom} />
      <Blank bottom={bottom} />
      <Blank bottom={bottom} />
    </>
  );
}

function ColumnHead({ name, active = false }) {
  return (
    <th
      scope="col"
      className={`p-0 font-normal ${
        active
          ? "border-b-4 border-[#3b7649] bg-[#f2f2f2] text-[#3b7649]"
          : "border-b-2 border-[#b9b9b9] bg-gradient-to-b from-[#fdfdfd] to-[#f6f6f6] text-[#5f5f5f]"
      }`}
    >
      <div className={`flex items-center ${active ? "h-[94px]" : "h-24"}`}>
        <span className="flex-1 pt-1 text-center">{name}</span>
        <span className="h-full w-0.5 bg-gradient-to-b from-transparent to-[#cfcfcf]" />
      </div>
    </th>
  );
}

function Worksheet() {
  return (
    <table className={`w-full table-fixed border-separate border-spacing-0 bg-white text-[42px] leading-[50px] text-black [font-variant-ligatures:none] ${SHEET}`}>
      <colgroup>
        <col className="w-[98px]" />
        <col className="w-[10px]" />
        <col className="w-[236px]" />
        <col className="w-[426px]" />
        <col className="w-[436px]" />
        <col className="w-[528px]" />
        <col className="w-[484px]" />
        <col className="w-[440px]" />
        <col />
      </colgroup>
      <thead>
        <tr>
          <th scope="col" aria-label="Select all" className="border-b-2 border-r-2 border-[#b9b9b9] bg-[#fafafa] p-0">
            <div className="flex h-24 items-end justify-end pb-1 pr-1">
              <Icon w={84} h={84}><path d="M84 0v84H0z" fill="#dfdfdf" /></Icon>
            </div>
          </th>
          <ColumnHead name="" />
          <ColumnHead name="C" />
          <ColumnHead name="D" />
          <ColumnHead name="E" />
          <ColumnHead name="F" />
          <ColumnHead name="G" active />
          <ColumnHead name="H" />
          <th scope="col" className="border-b-2 border-[#b9b9b9] bg-gradient-to-b from-[#fdfdfd] to-[#f6f6f6] pb-0 pl-[18px] pr-0 pt-1 font-normal text-[#5f5f5f]">I</th>
        </tr>
      </thead>
      <tbody>
        {ROWS.map((row) => {
          const inTable = row >= 8 && row <= 15;
          return (
            <tr key={row}>
              <th scope="row" className="border-r-2 border-[#b9b9b9] bg-gradient-to-r from-[#fdfdfd] to-[#f5f5f5] p-0 font-normal text-[#5f5f5f]">
                <div className={`flex flex-col ${row === 5 ? "h-16" : "h-[66px]"}`}>
                  <span className="flex flex-1 items-center justify-center">{row}</span>
                  <span className="h-0.5 bg-gradient-to-r from-transparent to-[#cfcfcf]" />
                </div>
              </th>
              <Blank />
              <Blank />
              <Blank right={inTable ? "border-r-black" : undefined} />
              <RowCells row={row} />
              <Blank />
              <td className="border-b-2 border-[#d4d4d4]" />
            </tr>
          );
        })}
        <tr className="h-1" aria-hidden="true">
          <td className="border-r-2 border-[#b9b9b9] bg-[#f9f9f9] p-0" />
          {[0, 1, 2, 3, 4, 5, 6].map((n) => <td key={n} className="border-r-2 border-[#d4d4d4] p-0" />)}
          <td className="p-0" />
        </tr>
      </tbody>
    </table>
  );
}

export default function App() {
  return (
    <div className="min-h-screen overflow-hidden bg-white">
      <MenuBar />
      <TitleBar />
      <Ribbon />
      <FormulaBar />
      <div className="h-1.5 border-y border-[#999] bg-[#e8e8e8]" />
      <Worksheet />
    </div>
  );
}
